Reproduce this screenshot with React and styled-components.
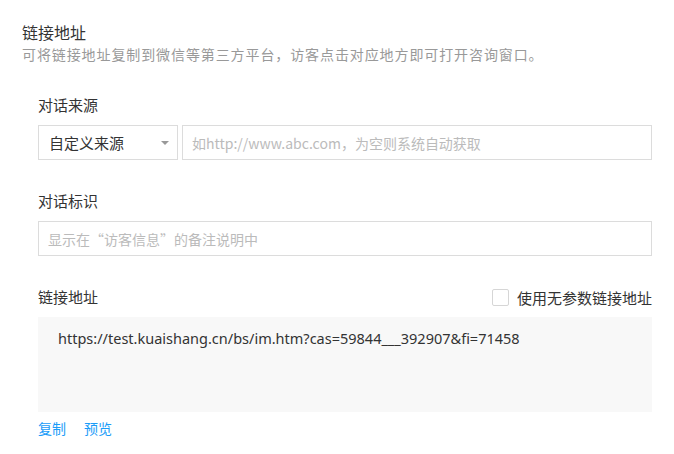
import React from 'react';
import styled, { createGlobalStyle } from 'styled-components';

const GlobalStyle = createGlobalStyle`
  html, body {
    margin: 0;
    padding: 0;
    background: #fff;
  }
  body {
    font-family: "Noto Sans", "Noto Sans CJK SC", sans-serif;
    color: #333;
  }
  * {
    box-sizing: border-box;
  }
`;

const Page = styled.div`
  padding: 22px 22px 0 22px;
  width: 674px;
`;

const Title = styled.h3`
  margin: 0;
  font-size: 16px;
  font-weight: 400;
  line-height: 22px;
  color: #333;
`;

const Desc = styled.p`
  margin: 0;
  font-size: 14px;
  line-height: 22px;
  letter-spacing: 0.9px;
  color: #999;
`;

const Form = styled.div`
  margin-top: 28px;
  padding-left: 16px;
  width: 630px;
`;

const Field = styled.div`
  margin-bottom: ${(p) => p.$gap ?? 30}px;
`;

const LabelRow = styled.div`
  display: flex;
  align-items: center;
  justify-content: space-between;
  height: 22px;
  margin-bottom: 9px;
`;

const Label = styled.span`
  font-size: 15px;
  line-height: 22px;
  color: #333;
`;

const Row = styled.div`
  display: flex;
  gap: 4px;
`;

const Select = styled.div`
  width: 140px;
  height: 35px;
  flex-shrink: 0;
  border: 1px solid #dcdcdc;
  display: flex;
  align-items: center;
  justify-content: space-between;
  padding: 0 8px 0 10px;
  font-size: 15px;
  color: #333;
`;

const Caret = styled.span`
  width: 0;
  height: 0;
  border-left: 4px solid transparent;
  border-right: 4px solid transparent;
  border-top: 4px solid #999;
`;

const Input = styled.input`
  flex: 1;
  width: 100%;
  height: 35px;
  border: 1px solid #dcdcdc;
  padding: 0 9px;
  font-family: "Noto Sans CJK SC", "Noto Sans", sans-serif;
  font-size: 14px;
  color: #333;
  outline: none;
  &::placeholder {
    color: #bbb;
  }
`;

const Check = styled.label`
  display: flex;
  align-items: center;
  gap: 8px;
  font-size: 15px;
  color: #333;
`;

const Box = styled.span`
  width: 17px;
  height: 17px;
  border: 1px solid #d6d6d6;
  border-radius: 2px;
  background: #fff;
`;

const LinkBox = styled.div`
  height: 95px;
  background: #f8f8f8;
  padding: 10px 20px;
  font-size: 14.5px;
  line-height: 22px;
  color: #333;
  word-break: break-all;
`;

const Actions = styled.div`
  display: flex;
  gap: 18px;
  margin-top: 7px;
`;

const Action = styled.a`
  font-size: 14px;
  line-height: 20px;
  color: #1a9cf8;
  cursor: pointer;
  text-decoration: none;
`;

const App = () => {
  return (
    <>
      <GlobalStyle />
      <Page>
        <Title>链接地址</Title>
        <Desc>可将链接地址复制到微信等第三方平台，访客点击对应地方即可打开咨询窗口。</Desc>
        <Form>
          <Field>
            <LabelRow>
              <Label>对话来源</Label>
            </LabelRow>
            <Row>
              <Select>
                自定义来源
                <Caret />
              </Select>
              <Input placeholder="如http://www.abc.com，为空则系统自动获取" />
            </Row>
          </Field>
          <Field>
            <LabelRow>
              <Label>对话标识</Label>
            </LabelRow>
            <Input placeholder="显示在“访客信息”的备注说明中" />
          </Field>
          <Field $gap={0}>
            <LabelRow>
              <Label>链接地址</Label>
              <Check>
                <Box />
                使用无参数链接地址
              </Check>
            </LabelRow>
            <LinkBox>https://test.kuaishang.cn/bs/im.htm?cas=59844___392907&amp;fi=71458</LinkBox>
            <Actions>
              <Action>复制</Action>
              <Action>预览</Action>
            </Actions>
          </Field>
        </Form>
      </Page>
    </>
  );
};

export default App;
